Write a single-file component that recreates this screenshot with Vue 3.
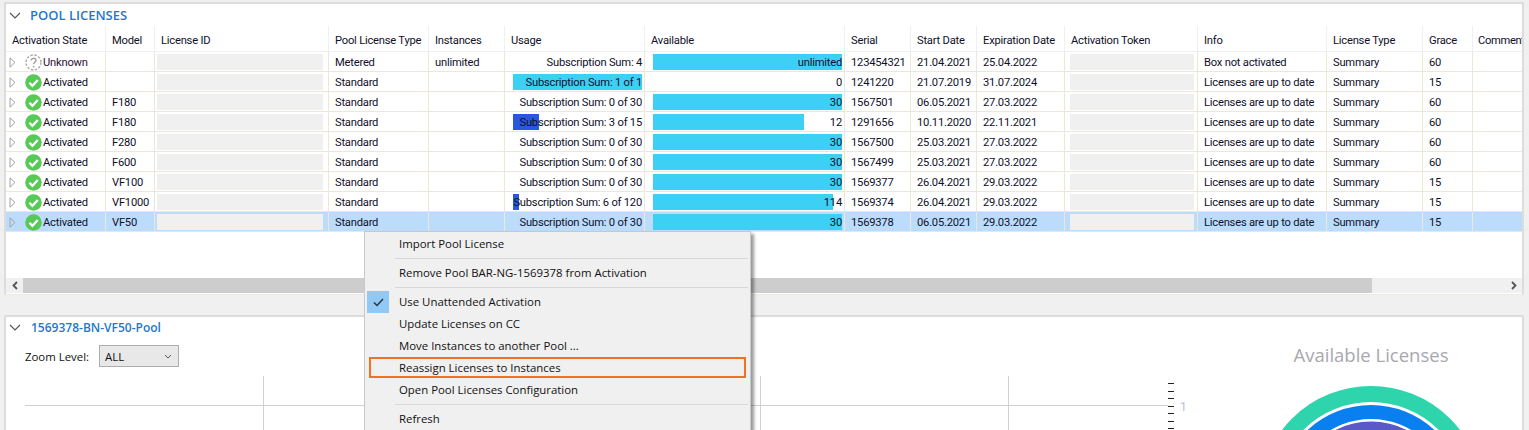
<template>
  <div class="page">
    <section class="panel pool-panel">
      <header class="panel-header">
        <svg class="chevron" width="12" height="7" viewBox="0 0 12 7"><path d="M1 1l5 5 5-5" /></svg>
        <span class="panel-title upper">POOL LICENSES</span>
      </header>

      <div class="row head">
        <div v-for="col in columns" :key="col" class="cell">{{ col }}</div>
      </div>
      <div v-for="(r, i) in rows" :key="i" class="row" :class="{ selected: r.selected }">
        <div class="cell state">
          <svg class="expander" width="7" height="11" viewBox="0 0 7 11"><path d="M1 .8l5 4.7-5 4.7z" /></svg>
          <svg v-if="r.state === 'Unknown'" class="state-icon" width="17" height="17" viewBox="0 0 17 17">
            <circle cx="8.5" cy="8.5" r="7.5" fill="none" stroke="#a8a8a8" stroke-width="1.4" stroke-dasharray="2.4 1.6" />
            <path d="M6.2 6.6c0-3 4.8-3 4.8-.2 0 1.8-2.4 1.8-2.4 3.8" fill="none" stroke="#a0a0a0" stroke-width="1.4" />
            <circle cx="8.6" cy="12.6" r=".9" fill="#a0a0a0" />
          </svg>
          <svg v-else class="state-icon" width="17" height="17" viewBox="0 0 17 17">
            <circle cx="8.5" cy="8.5" r="8.3" fill="#57c957" />
            <path d="M4.4 8.8l3 3 5.4-5.8" fill="none" stroke="#fff" stroke-width="2.3" />
          </svg>
          <span :class="{ unknown: r.state === 'Unknown' }">{{ r.state }}</span>
        </div>
        <div class="cell">{{ r.model }}</div>
        <div class="cell id-cell"><div class="masked id-mask"></div></div>
        <div class="cell">{{ r.type }}</div>
        <div class="cell">{{ r.instances }}</div>
        <div class="cell bar-cell">
          <div class="bar-track">
            <div v-if="r.usage" class="bar" :class="r.usage < 1 ? 'blue' : 'cyan'" :style="{ width: r.usage * 100 + '%' }"></div>
          </div>
          <span class="bar-text">{{ r.usageText }}</span>
        </div>
        <div class="cell bar-cell">
          <div class="bar-track">
            <div v-if="r.avail" class="bar cyan" :style="{ width: r.avail * 100 + '%' }"></div>
          </div>
          <span class="bar-text">{{ r.availText }}</span>
        </div>
        <div class="cell">{{ r.serial }}</div>
        <div class="cell">{{ r.start }}</div>
        <div class="cell">{{ r.end }}</div>
        <div class="cell token-cell"><div class="masked token-mask"></div></div>
        <div class="cell">{{ r.info }}</div>
        <div class="cell">Summary</div>
        <div class="cell">{{ r.grace }}</div>
        <div class="cell"></div>
      </div>

      <div class="spacer"></div>

      <div class="hscroll">
        <div class="scroll-btn">
          <svg width="8" height="9" viewBox="0 0 8 9"><path d="M6 1L2.500 4.500 6 8" /></svg>
        </div>
        <div class="scroll-thumb"></div>
        <div class="scroll-track"></div>
        <div class="scroll-btn">
          <svg width="8" height="9" viewBox="0 0 8 9"><path d="M2 1l3.500 3.500L2 8" /></svg>
        </div>
      </div>
    </section>

    <section class="panel chart-panel">
      <div class="chart-left">
        <header class="panel-header small">
          <svg class="chevron" width="12" height="7" viewBox="0 0 12 7"><path d="M1 1l5 5 5-5" /></svg>
          <span class="panel-title">1569378-BN-VF50-Pool</span>
        </header>
        <div class="zoom-row">
          <span>Zoom Level:</span>
          <div class="select">
            <span>ALL</span>
            <svg width="8" height="5" viewBox="0 0 8 5"><path d="M1 1l3 3 3-3" /></svg>
          </div>
        </div>
        <svg class="plot" width="1190" height="54" viewBox="0 0 1190 54">
          <g stroke="#d0d0d0" stroke-width="1">
            <path d="M19 29.500H1162" />
            <path d="M257.500 0V54M506.500 0V54M754.500 0V54M1002.500 0V54" />
          </g>
          <path stroke="#222" stroke-width="1" d="M1162 7.500h6M1162 15.500h6M1162 22.500h6M1162 30.500h6M1162 37.500h6M1162 45.500h6M1162 52.500h6" />
          <text x="1174" y="34.500" class="axis-label">1</text>
        </svg>
      </div>
      <div class="chart-right">
        <div class="donut-title">Available Licenses</div>
        <svg class="donut" width="302" height="60" viewBox="0 0 302 60">
          <g fill="none">
            <circle cx="151" cy="123" r="104" stroke="#2dd4ac" stroke-width="16" />
            <circle cx="151" cy="123" r="86" stroke="#0a7ff0" stroke-width="14" />
            <circle cx="151" cy="123" r="70" stroke="#5b58c8" stroke-width="13" />
          </g>
        </svg>
      </div>
    </section>

    <div class="context-menu">
      <div class="menu-item">Import Pool License</div>
      <div class="menu-sep"></div>
      <div class="menu-item">Remove Pool BAR-NG-1569378 from Activation</div>
      <div class="menu-sep"></div>
      <div class="menu-item checked">
        <span class="check">
          <svg width="11" height="9" viewBox="0 0 11 9"><path d="M1 4.500l3 3 6-6.500" /></svg>
        </span>
        Use Unattended Activation
      </div>
      <div class="menu-item">Update Licenses on CC</div>
      <div class="menu-item">Move Instances to another Pool ...</div>
      <div class="menu-item marked">Reassign Licenses to Instances</div>
      <div class="menu-item">Open Pool Licenses Configuration</div>
      <div class="menu-sep"></div>
      <div class="menu-item">Refresh</div>
    </div>
  </div>
</template>

<script setup>
const columns = [
  'Activation State', 'Model', 'License ID', 'Pool License Type', 'Instances', 'Usage', 'Available',
  'Serial', 'Start Date', 'Expiration Date', 'Activation Token', 'Info', 'License Type', 'Grace', 'Comment',
]

const upToDate = 'Licenses are up to date'

const rows = [
  { state: 'Unknown', model: '', type: 'Metered', instances: 'unlimited', usage: 0, usageText: 'Subscription Sum: 4', avail: 1, availText: 'unlimited', serial: '123454321', start: '21.04.2021', end: '25.04.2022', info: 'Box not activated', grace: 60 },
  { state: 'Activated', model: '', type: 'Standard', usage: 1, usageText: 'Subscription Sum: 1 of 1', avail: 0, availText: '0', serial: '1241220', start: '21.07.2019', end: '31.07.2024', info: upToDate, grace: 15 },
  { state: 'Activated', model: 'F180', type: 'Standard', usage: 0, usageText: 'Subscription Sum: 0 of 30', avail: 1, availText: '30', serial: '1567501', start: '06.05.2021', end: '27.03.2022', info: upToDate, grace: 60 },
  { state: 'Activated', model: 'F180', type: 'Standard', usage: 0.2, usageText: 'Subscription Sum: 3 of 15', avail: 0.8, availText: '12', serial: '1291656', start: '10.11.2020', end: '22.11.2021', info: upToDate, grace: 60 },
  { state: 'Activated', model: 'F280', type: 'Standard', usage: 0, usageText: 'Subscription Sum: 0 of 30', avail: 1, availText: '30', serial: '1567500', start: '25.03.2021', end: '27.03.2022', info: upToDate, grace: 60 },
  { state: 'Activated', model: 'F600', type: 'Standard', usage: 0, usageText: 'Subscription Sum: 0 of 30', avail: 1, availText: '30', serial: '1567499', start: '25.03.2021', end: '27.03.2022', info: upToDate, grace: 60 },
  { state: 'Activated', model: 'VF100', type: 'Standard', usage: 0, usageText: 'Subscription Sum: 0 of 30', avail: 1, availText: '30', serial: '1569377', start: '26.04.2021', end: '29.03.2022', info: upToDate, grace: 15 },
  { state: 'Activated', model: 'VF1000', type: 'Standard', usage: 0.05, usageText: 'Subscription Sum: 6 of 120', avail: 0.95, availText: '114', serial: '1569374', start: '26.04.2021', end: '29.03.2022', info: upToDate, grace: 15 },
  { state: 'Activated', model: 'VF50', type: 'Standard', usage: 0, usageText: 'Subscription Sum: 0 of 30', avail: 1, availText: '30', serial: '1569378', start: '06.05.2021', end: '29.03.2022', info: upToDate, grace: 15, selected: true },
]
</script>

<style>
html,
body {
  margin: 0;
  background: #f0f0f0;
}
</style>

<style scoped>
.page {
  position: relative;
  width: 1529px;
  height: 430px;
  overflow: hidden;
  box-sizing: border-box;
  padding: 2px 5px 0 4px;
  background: #f0f0f0;
  font-family: Roboto, "Liberation Sans", sans-serif;
  font-size: 11.2px;
  letter-spacing: -0.22px;
  color: #101028;
}

.panel {
  box-sizing: border-box;
  border: 2px solid #dcdcdc;
  background: #fff;
}

.pool-panel {
  height: 293px;
  display: flex;
  flex-direction: column;
  overflow: hidden;
  border-bottom: 1px solid #efebde;
}

.panel-header {
  display: flex;
  align-items: center;
  height: 22px;
  padding-left: 3px;
  flex: none;
}

.chevron {
  fill: none;
  stroke: #555;
  stroke-width: 1.2;
  margin-right: 10px;
}

.panel-title {
  font-family: "Open Sans", sans-serif;
  font-size: 12px;
  font-weight: 600;
  letter-spacing: 0;
  color: #1f78c8;
}

.panel-title.upper {
  font-size: 13px;
  margin-left: -1px;
}

.row {
  display: grid;
  grid-template-columns: 100px 49px 174px 100px 76px 140px 200px 66px 66px 88px 133px 129px 96px 50px 60px;
  height: 20px;
  flex: none;
}

.row .cell {
  box-sizing: border-box;
  display: flex;
  align-items: center;
  padding-top: 1px;
  padding-left: 6px;
  border-right: 1px solid #ece7d8;
  border-bottom: 1px solid #ece7d8;
  white-space: nowrap;
  overflow: hidden;
}

.row.head {
  height: 26px;
}

.row.head .cell {
  padding-top: 3px;
  border-right: 1px solid #f0f0f0;
  border-bottom: 1px solid #f0f0f0;
}

.row.head .cell:last-child {
  padding-left: 5px;
  letter-spacing: -0.35px;
}

.row.selected {
  background: #bcdcfc;
}

.row .state {
  padding-left: 3px;
}

.expander {
  fill: #fff;
  stroke: #a0a0a0;
  flex: none;
  margin-right: 9px;
}

.selected .expander {
  fill: #bcdcfc;
}

.state-icon {
  flex: none;
  margin-right: 1px;
}

.unknown {
  color: #301038;
}

.masked {
  height: 16px;
  margin-top: -1px;
  background: #f0f0f0;
}

.row .id-cell {
  padding-left: 2px;
}

.row .token-cell {
  padding-left: 5px;
}

.id-mask {
  width: 166px;
}

.token-mask {
  width: 124px;
}

.row .bar-cell {
  position: relative;
  justify-content: flex-end;
  padding-right: 2px;
}

.bar-track {
  position: absolute;
  left: 8px;
  right: 2px;
  top: 2px;
  height: 16px;
}

.bar {
  height: 100%;
}

.bar.cyan {
  background: #3dd0f5;
}

.bar.blue {
  background: #2858e0;
}

.bar-text {
  position: relative;
}

.spacer {
  flex: 1;
}

.hscroll {
  display: flex;
  height: 15px;
  margin-bottom: 1px;
  flex: none;
  background: #f0f0f0;
}

.scroll-btn {
  width: 17px;
  display: flex;
  align-items: center;
  justify-content: center;
  flex: none;
}

.scroll-btn svg {
  fill: none;
  stroke: #555;
  stroke-width: 1.8;
}

.scroll-thumb {
  width: 1349px;
  background: #cdcdcd;
}

.scroll-track {
  flex: 1;
}

.chart-panel {
  display: flex;
  margin-top: 20px;
  height: 120px;
  overflow: hidden;
}

.chart-left {
  width: 1214px;
  flex: none;
}

.panel-header.small {
  height: 20px;
}

.zoom-row {
  display: flex;
  align-items: center;
  gap: 10px;
  padding-left: 19px;
  margin-top: 8px;
  color: #111;
  font-family: "Open Sans", sans-serif;
  font-size: 11.4px;
  letter-spacing: 0;
}

.select {
  box-sizing: border-box;
  width: 80px;
  height: 22px;
  display: flex;
  align-items: center;
  justify-content: space-between;
  padding: 0 6px 0 5px;
  border: 1px solid #adadad;
  background: #e8e8e8;
}

.select svg {
  fill: none;
  stroke: #555;
}

.plot {
  display: block;
  margin-top: 9px;
}

.axis-label {
  font-size: 12px;
  fill: #b4c0dc;
}

.chart-right {
  flex: 1;
  min-width: 0;
}

.donut-title {
  margin-top: 26px;
  height: 24px;
  line-height: 24px;
  text-align: center;
  font-family: "Open Sans", sans-serif;
  font-size: 18.5px;
  letter-spacing: 0;
  color: #a8a8ae;
}

.donut {
  display: block;
  margin-top: 8px;
}

.context-menu {
  position: absolute;
  left: 364px;
  top: 231px;
  width: 387px;
  height: 210px;
  box-sizing: border-box;
  padding-top: 1px;
  background: #f0f0f0;
  border: 1px solid #c8c8c8;
  box-shadow: 3px 3px 3px rgba(0, 0, 0, 0.4);
  color: #111;
  font-family: "Open Sans", sans-serif;
  font-size: 11.4px;
  letter-spacing: 0;
}

.menu-item {
  position: relative;
  height: 22px;
  line-height: 22px;
  padding-left: 34px;
}

.menu-sep {
  height: 1px;
  margin: 3px 2px 3px 30px;
  background: #d7d7d7;
}

.check {
  position: absolute;
  left: 2px;
  top: 0;
  width: 22px;
  height: 22px;
  display: flex;
  align-items: center;
  justify-content: center;
  background: #90c8f6;
}

.check svg {
  fill: none;
  stroke: #333;
  stroke-width: 1.5;
}

.marked::after {
  content: "";
  position: absolute;
  left: 4px;
  right: 4px;
  top: 0;
  height: 17px;
  border: 2px solid #f37021;
}
</style>
